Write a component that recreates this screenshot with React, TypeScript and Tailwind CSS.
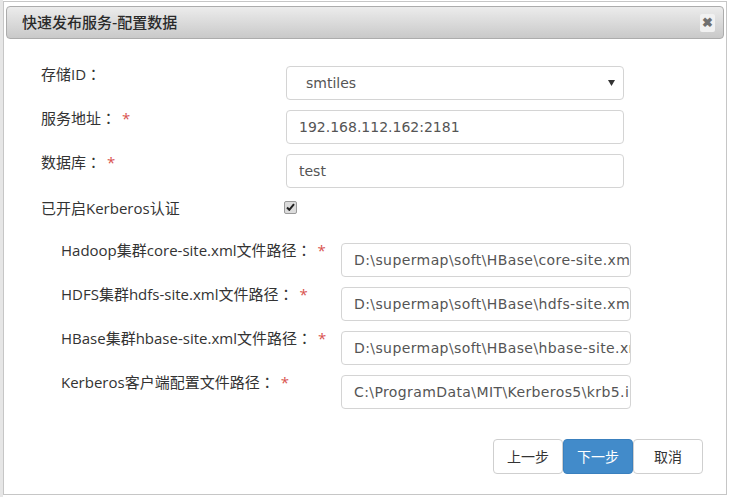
import React, { useState } from "react";

const labelFont = { fontFamily: '"Open Sans", "Noto Sans CJK SC", sans-serif' };
const inputFont = { fontFamily: '"DejaVu Sans", "Noto Sans CJK SC", sans-serif' };
// full-width colon drawn centred in its cell
const colonFont = { fontFamily: '"Noto Sans CJK TC", sans-serif' };

const Required = () => <span className="ml-[6px] text-[#d9534f]">*</span>;
const Colon = () => <span style={colonFont}>：</span>;

interface PathField {
  label: string;
  value: string;
}

const kerberosFields: PathField[] = [
  { label: "Hadoop集群core-site.xml文件路径", value: "D:\\supermap\\soft\\HBase\\core-site.xml" },
  { label: "HDFS集群hdfs-site.xml文件路径", value: "D:\\supermap\\soft\\HBase\\hdfs-site.xml" },
  { label: "HBase集群hbase-site.xml文件路径", value: "D:\\supermap\\soft\\HBase\\hbase-site.xml" },
  { label: "Kerberos客户端配置文件路径", value: "C:\\ProgramData\\MIT\\Kerberos5\\krb5.ini" },
];

const TextBox = ({ value, className }: { value: string; className: string }) => (
  <input
    readOnly
    value={value}
    className={`h-[34px] shrink-0 rounded-[4px] border border-[#d4d4d4] bg-white pl-[12px] pr-0 text-[14px] text-[#555] outline-none ${className}`}
    style={inputFont}
  />
);

const App = () => {
  const [kerberos, setKerberos] = useState(true);

  return (
    <div className="flex h-[497px] w-[730px] bg-white" style={labelFont}>
      <div className="w-[3px] bg-[#e6e6e6]" />
      <div className="mt-px flex h-[494px] w-[724px] flex-col border border-[#c6c6c6] bg-white px-[2px] pt-[4px]">
        {/* title bar */}
        <div className="flex h-[33px] items-center justify-between rounded-[4px] border border-[#acacac] bg-gradient-to-b from-[#ececec] to-[#c9c9c9] pl-[15px] pr-[8px]">
          <span className="text-[15px] font-medium text-[#2a2a2a]" style={{ fontFamily: '"Noto Sans CJK SC", sans-serif' }}>
            快速发布服务-配置数据
          </span>
          <span className="flex h-[18px] w-[15px] items-center justify-center rounded-[2px] bg-[#f1f1f1] text-[13px] font-bold leading-none text-[#707070]">
            ✖
          </span>
        </div>

        {/* form */}
        <div className="flex flex-col pl-[35px] pt-[27px] text-[15px] text-[#333]">
          <div className="flex items-start">
            <label className="w-[245px] -mt-[2px] leading-[20px]">
              存储ID<Colon />
            </label>
            <div
              className="flex h-[34px] w-[338px] items-center justify-between rounded-[4px] border border-[#d4d4d4] bg-white pl-[19px] pr-[8px] text-[14px] text-[#555]"
              style={inputFont}
            >
              <span>smtiles</span>
              <svg width="7" height="6" viewBox="0 0 7 6">
                <path d="M0 0h7L3.5 6z" fill="#333" />
              </svg>
            </div>
          </div>

          <div className="mt-[10px] flex items-start">
            <label className="w-[245px] -mt-[2px] leading-[20px]">
              服务地址<Colon />
              <Required />
            </label>
            <TextBox value="192.168.112.162:2181" className="w-[338px]" />
          </div>

          <div className="mt-[10px] flex items-start">
            <label className="w-[245px] -mt-[2px] leading-[20px]">
              数据库<Colon />
              <Required />
            </label>
            <TextBox value="test" className="w-[338px]" />
          </div>

          <div className="mt-[9px] flex h-[22px] items-center">
            <label className="w-[244px] leading-[20px]">已开启Kerberos认证</label>
            <button
              type="button"
              onClick={() => setKerberos(!kerberos)}
              className="-ml-[1px] -mt-[2px] flex h-[13px] w-[13px] items-center justify-center rounded-[2px] border border-[#9a9a9a] bg-[#dcdcdc]"
            >
              {kerberos && (
                <svg width="9" height="8" viewBox="0 0 9 8">
                  <path d="M1 4.5l2.3 2.3L8 1.2" stroke="#222" strokeWidth="2" fill="none" />
                </svg>
              )}
            </button>
          </div>

          <div className="mt-[24px] flex flex-col gap-[10px] pl-[20px]">
            {kerberosFields.map((f) => (
              <div key={f.label} className="flex items-start">
                <label className="w-[280px] -mt-[3px] whitespace-nowrap leading-[20px]">
                  {f.label}
                  <Colon />
                  <Required />
                </label>
                <TextBox value={f.value} className="w-[290px] tracking-[0.4px]" />
              </div>
            ))}
          </div>
        </div>

        {/* footer buttons */}
        <div className="mt-[30px] flex justify-end pr-[21px] text-[14px]">
          <button className="h-[35px] w-[70px] rounded-[4px] border border-[#cfcfcf] bg-white text-[#333]">上一步</button>
          <button className="h-[35px] w-[70px] rounded-[4px] border border-[#3a80be] bg-[#428bca] text-white">下一步</button>
          <button className="h-[35px] w-[70px] rounded-[4px] border border-[#cfcfcf] bg-white text-[#333]">取消</button>
        </div>
      </div>
    </div>
  );
};

export default App;
